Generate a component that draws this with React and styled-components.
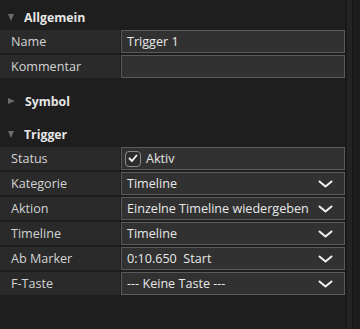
import React from 'react';
import styled, { createGlobalStyle } from 'styled-components';

const GlobalStyle = createGlobalStyle`
  html, body {
    margin: 0;
    padding: 0;
    background: #1e1e1e;
  }
  body {
    font-family: "Open Sans", "DejaVu Sans", sans-serif;
  }
`;

// Layout
const Page = styled.div`
  display: flex;
  width: 360px;
  height: 329px;
  background: #1e1e1e;
  overflow: hidden;
`;

const Panel = styled.div`
  width: 345px;
  display: flex;
  flex-direction: column;
`;

const ScrollTrack = styled.div`
  width: 15px;
  display: flex;
  background: #1c1c1c;
`;

const TrackGap = styled.div`
  width: 2px;
  background: #191919;
`;

const TrackBar = styled.div`
  width: 5px;
  background: #232323;
`;

const TrackLine = styled.div`
  width: 1px;
  background: #151515;
`;

const Section = styled.section`
  margin-top: ${(p) => p.$top}px;
`;

const SectionHeader = styled.div`
  display: flex;
  align-items: center;
  height: 26px;
  padding-left: 8px;
  gap: 10px;
  color: #e6e6e6;
  font-size: 12.3px;
  font-weight: 700;
`;

const Arrow = styled.span`
  width: 0;
  height: 0;
  ${(p) =>
    p.$open
      ? `border-left: 3.5px solid transparent;
         border-right: 3.5px solid transparent;
         border-top: 7px solid #6b6b6b;`
      : `border-top: 3.5px solid transparent;
         border-bottom: 3.5px solid transparent;
         border-left: 7px solid #6b6b6b;`}
`;

const Row = styled.div`
  display: grid;
  grid-template-columns: 120px 1fr;
  height: 23px;
  margin-bottom: 2px;
`;

const Label = styled.div`
  background: #2a2a2a;
  color: #d4d4d4;
  font-size: 12.6px;
  line-height: 23px;
  padding-left: 11px;
  white-space: nowrap;
`;

const Value = styled.div`
  display: flex;
  align-items: center;
  justify-content: space-between;
  box-sizing: border-box;
  margin-left: 1px;
  border: 1px solid #5a5a5a;
  background: #313131;
  color: #e8e8e8;
  font-size: 12.6px;
  padding: 0 11px 0 5px;
  white-space: nowrap;
`;

const CheckWrap = styled.div`
  display: flex;
  align-items: center;
  gap: 5px;
  margin-left: -2px;
`;

const CheckBox = styled.span`
  display: flex;
  align-items: center;
  justify-content: center;
  box-sizing: border-box;
  width: 16px;
  height: 16px;
  border: 1.5px solid #8a8a8a;
  border-radius: 4px;
  background: #2c2c2c;
`;

const Chevron = () => (
  <svg width="15" height="8" viewBox="0 0 15 8">
    <polyline points="1.5,1.5 7.5,6.5 13.5,1.5" fill="none" stroke="#f2f2f2" strokeWidth="2" strokeLinecap="round" strokeLinejoin="round" />
  </svg>
);

const Check = () => (
  <svg width="10" height="9" viewBox="0 0 10 9">
    <polyline points="1.5,4.5 4,7 8.5,1.5" fill="none" stroke="#f5f5f5" strokeWidth="1.8" strokeLinecap="round" strokeLinejoin="round" />
  </svg>
);

const SelectRow = ({ label, value }) => (
  <Row>
    <Label>{label}</Label>
    <Value>
      <span>{value}</span>
      <Chevron />
    </Value>
  </Row>
);

const triggerRows = [
  { label: 'Kategorie', value: 'Timeline' },
  { label: 'Aktion', value: 'Einzelne Timeline wiedergeben' },
  { label: 'Timeline', value: 'Timeline' },
  { label: 'Ab Marker', value: '0:10.650  Start' },
  { label: 'F-Taste', value: '--- Keine Taste ---' },
];

const App = () => {
  return (
    <>
      <GlobalStyle />
      <Page>
        <Panel>
          <Section $top={4}>
            <SectionHeader>
              <Arrow $open />
              Allgemein
            </SectionHeader>
            <Row>
              <Label>Name</Label>
              <Value>Trigger 1</Value>
            </Row>
            <Row>
              <Label>Kommentar</Label>
              <Value />
            </Row>
          </Section>

          <Section $top={8}>
            <SectionHeader>
              <Arrow />
              Symbol
            </SectionHeader>
          </Section>

          <Section $top={7}>
            <SectionHeader>
              <Arrow $open />
              Trigger
            </SectionHeader>
            <Row>
              <Label>Status</Label>
              <Value>
                <CheckWrap>
                  <CheckBox>
                    <Check />
                  </CheckBox>
                  Aktiv
                </CheckWrap>
              </Value>
            </Row>
            {triggerRows.map((r) => (
              <SelectRow key={r.label} label={r.label} value={r.value.replace(/  /g, '\u00a0\u00a0')} />
            ))}
          </Section>
        </Panel>
        <ScrollTrack>
          <TrackGap />
          <TrackBar />
          <TrackLine />
        </ScrollTrack>
      </Page>
    </>
  );
};

export default App;
